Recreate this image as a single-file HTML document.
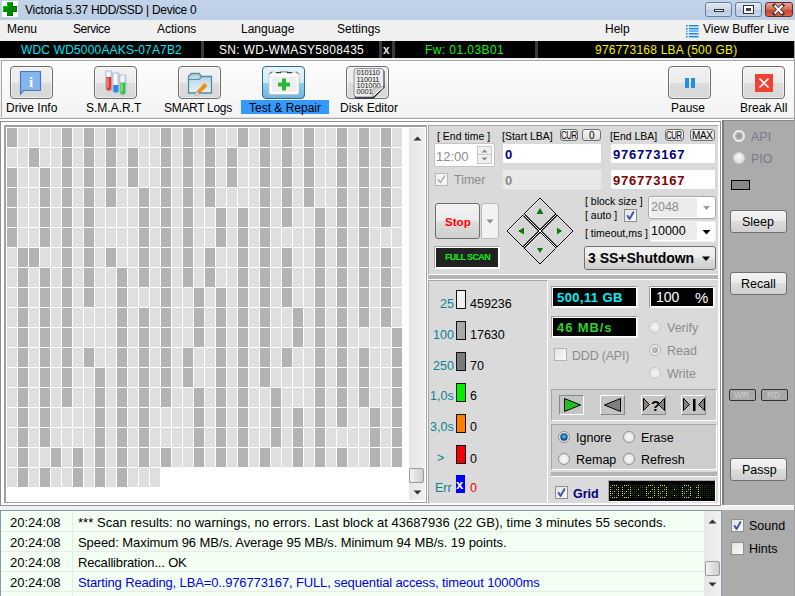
<!DOCTYPE html>
<html><head><meta charset="utf-8">
<style>
*{margin:0;padding:0;box-sizing:border-box}
html,body{width:795px;height:596px;overflow:hidden;background:#f0f0f0;font-family:"Liberation Sans",sans-serif;font-size:12px;color:#000}
.a{position:absolute;white-space:nowrap}
.t{position:absolute;white-space:nowrap;line-height:1}
.btn{position:absolute;border:1px solid #707070;border-radius:3px;background:linear-gradient(#f3f3f3 0%,#ebebeb 49%,#dddddd 50%,#cfcfcf 100%)}
.tb{position:absolute;border:1px solid #6e6e6e;box-shadow:inset 0 0 0 1px rgba(255,255,255,.55);border-radius:4px;background:linear-gradient(#f2f2f2 0%,#ebebeb 50%,#dddddd 51%,#d7d7d7 100%)}
.inp{position:absolute;background:#fff;border:1px solid #d8d8d8;border-radius:2px}
.radio{position:absolute;width:12px;height:12px;border-radius:50%;border:1px solid #8e8f8f;background:radial-gradient(circle at 50% 50%,#f4f4f4 0,#e0e0e0 70%,#cfcfcf 100%)}
.chk{position:absolute;width:13px;height:13px;border:1px solid #8e8f8f;background:linear-gradient(135deg,#d4d4d4,#fcfcfc)}
</style></head><body>
<!-- title bar -->
<div class="a" style="left:0;top:0;width:795px;height:20px;background:linear-gradient(#c3d4e8,#b9cde5)"></div>
<div class="a" style="left:2px;top:1px;width:16px;height:16px;background:#fff"></div>
<svg class="a" style="left:0;top:0" width="20" height="20"><path d="M7 2h6v4h4v6h-4v4h-6v-4h-4v-6h4z" fill="#008a00"/><path d="M7 2h6v1h-5v4h-4v4h-1v-5h4z" fill="#00c800"/><path d="M13 3v3h4v6h-4v4h-6v-1h5v-4h4v-4h-4z" fill="#005a00" opacity=".6"/></svg>
<div class="t" style="left:25px;top:4px;font-size:12px;letter-spacing:-0.28px;color:#000">Victoria 5.37 HDD/SSD | Device 0</div>
<div class="a" style="left:705px;top:2px;width:27px;height:15px;border:1px solid #6d7f99;border-radius:3px;background:linear-gradient(#e3ebf5,#c9d7e8 50%,#b7c9df 51%,#c9d9ec)"></div>
<div class="a" style="left:714px;top:9px;width:10px;height:3px;background:#fff;border:1px solid #333"></div>
<div class="a" style="left:735px;top:2px;width:27px;height:15px;border:1px solid #6d7f99;border-radius:3px;background:linear-gradient(#e3ebf5,#c9d7e8 50%,#b7c9df 51%,#c9d9ec)"></div>
<div class="a" style="left:743px;top:5px;width:11px;height:9px;background:#fff;border:1px solid #333;box-shadow:inset 0 0 0 1px #fff"></div><div class="a" style="left:746px;top:8px;width:5px;height:3px;background:#444"></div>
<div class="a" style="left:765px;top:2px;width:28px;height:15px;border:1px solid #6b2a22;border-radius:3px;background:linear-gradient(#e8a496,#d36a55 50%,#c3452c 51%,#d9644b)"></div>
<svg class="a" style="left:765px;top:2px" width="28" height="15"><path d="M9.5 3.5l8 8M17.5 3.5l-8 8" stroke="#333" stroke-width="3.6" stroke-linecap="square"/><path d="M9.5 3.5l8 8M17.5 3.5l-8 8" stroke="#fff" stroke-width="2"/></svg>
<!-- menu bar -->
<div class="t" style="left:7px;top:23px">Menu</div>
<div class="t" style="left:73px;top:23px;letter-spacing:-0.45px">Service</div>
<div class="t" style="left:157px;top:23px">Actions</div>
<div class="t" style="left:241px;top:23px">Language</div>
<div class="t" style="left:337px;top:23px">Settings</div>
<div class="t" style="left:605px;top:23px">Help</div>
<svg class="a" style="left:685px;top:24px" width="15" height="14"><rect x="1" y="1" width="13" height="12" fill="#d4e8fb"/><rect x="1" y="5" width="13" height="4" fill="#f0f0f0"/><g fill="#1a86ec"><rect x="1" y="1" width="1.6" height="1.4"/><rect x="4" y="1" width="9.5" height="1.4"/><rect x="1" y="4" width="1.6" height="1.4"/><rect x="4" y="4" width="9.5" height="1.4"/><rect x="1" y="9" width="1.6" height="1.4"/><rect x="4" y="9" width="9.5" height="1.4"/><rect x="1" y="12" width="1.6" height="1.4"/><rect x="4" y="12" width="9.5" height="1.4"/></g><g fill="#5aaaf4"><rect x="1" y="6.3" width="1.6" height="1.6"/><rect x="4" y="6.3" width="9.5" height="1.6"/></g></svg>
<div class="t" style="left:703px;top:23px">View Buffer Live</div>
<!-- drive bar -->
<div class="a" style="left:0;top:41px;width:794px;height:17px;background:#000"></div>
<div class="a" style="left:201px;top:41px;width:3px;height:17px;background:#3a3a3a"></div>
<div class="a" style="left:379px;top:41px;width:3px;height:17px;background:#3a3a3a"></div>
<div class="a" style="left:392px;top:41px;width:3px;height:17px;background:#3a3a3a"></div>
<div class="a" style="left:535px;top:41px;width:3px;height:17px;background:#3a3a3a"></div>
<div class="t" style="left:21px;top:44px;letter-spacing:0.17px;color:#00e4f0">WDC WD5000AAKS-07A7B2</div>
<div class="t" style="left:219px;top:44px;letter-spacing:0.3px;color:#fff">SN: WD-WMASY5808435</div>
<div class="t" style="left:383px;top:44px;color:#ddd;font-weight:bold">x</div>
<div class="t" style="left:425px;top:44px;letter-spacing:0.42px;color:#10f010">Fw: 01.03B01</div>
<div class="t" style="left:595px;top:44px;letter-spacing:0.23px;color:#f8f000">976773168 LBA (500 GB)</div>
<div class="a" style="left:794px;top:41px;width:1px;height:555px;background:#a0a0a0"></div>
<!-- toolbar -->
<div class="a" style="left:1px;top:60px;width:793px;height:57px;border-top:1px solid #a9a9a9;border-left:1px solid #a9a9a9;background:linear-gradient(#fdfdfd,#f3f3f3)"></div>
<div class="tb" style="left:10px;top:66px;width:43px;height:33px"></div>
<div class="tb" style="left:94px;top:66px;width:43px;height:33px"></div>
<div class="tb" style="left:178px;top:66px;width:43px;height:33px"></div>
<div class="a" style="left:262px;top:66px;width:43px;height:33px;border:1px solid #2c6a98;border-radius:4px;background:linear-gradient(#e6f4fc,#d3ecfa 50%,#93cdee 51%,#6fb7e0)"></div>
<div class="tb" style="left:346px;top:66px;width:43px;height:33px"></div>
<div class="tb" style="left:668px;top:66px;width:43px;height:33px"></div>
<div class="tb" style="left:742px;top:66px;width:43px;height:33px"></div>
<svg class="a" style="left:0;top:60px" width="795" height="45">
 <!-- drive info bubble -->
 <path d="M20.5 11.5h20v19h-17l-3 3.5z" fill="#86b5ee" stroke="#4779c4" stroke-width="1.2"/>
 <text x="31" y="26.5" font-family="Liberation Serif" font-size="15" font-weight="bold" fill="#fff" text-anchor="middle">i</text>
 <!-- smart tubes -->
 <defs><linearGradient id="gl" x1="0" x2="1"><stop offset="0" stop-color="#dfe8f4"/><stop offset=".45" stop-color="#ffffff"/><stop offset="1" stop-color="#c8d6ea"/></linearGradient></defs>
 <g stroke="#a4b6d2" stroke-width="0.9" fill="url(#gl)">
 <path d="M105.8 11h6v17a3 3 0 0 1-6 0z"/>
 <path d="M112.8 13h6v17a3 3 0 0 1-6 0z"/>
 <path d="M119.8 15h6v17a3 3 0 0 1-6 0z"/>
 </g>
 <path d="M106.3 17h5v11a2.5 2.5 0 0 1-5 0z" fill="#e4382c"/>
 <path d="M107.3 18h1.2v9.5h-1.2z" fill="#f4a09a"/>
 <path d="M113.3 25h5v5a2.5 2.5 0 0 1-5 0z" fill="#2a88e6"/>
 <path d="M120.3 22.5h5v9.5a2.5 2.5 0 0 1-5 0z" fill="#34c444"/>
 <path d="M121.3 23.5h1.2v8h-1.2z" fill="#a4eab0"/>
 <!-- smart logs folder -->
 <defs><linearGradient id="fg" x1="0" y1="0" x2="0" y2="1"><stop offset="0" stop-color="#b4d0da"/><stop offset="1" stop-color="#e6f2f6"/></linearGradient></defs>
 <path d="M188.5 16.5l3-3h7.5l2.5 3h10v16.5h-23z" fill="url(#fg)" stroke="#4e8fa6" stroke-width="1.3"/>
 <path d="M188.5 19.5h10.5l2.5-2.5" stroke="#4e8fa6" stroke-width="1.2" fill="none"/>
 <path d="M196.5 31.5l8-8.5 3 3-8.5 8z" fill="#f48c14"/>
 <path d="M196.5 31.5l3 2.5-4.5 1.8z" fill="#e8e8e8" stroke="#999" stroke-width="0.5"/>
 <!-- test & repair kit -->
 <rect x="269" y="12.3" width="30" height="22.2" rx="2" fill="#fbfbfb" stroke="#c0b8b0" stroke-width="0.6"/>
 <rect x="272" y="16.5" width="24.5" height="15.5" rx="2" fill="#eeeeee"/>
 <path d="M269.6 14.2l2.4-2.6M296.2 11.6l2.4 2.6" stroke="#505050" stroke-width="1" fill="none"/>
 <path d="M276 12.6h4.6l1-1.2M286.6 11.4l1 1.2h4.6" stroke="#404040" stroke-width="1.1" fill="none"/>
 <rect x="281.6" y="10.9" width="5" height="1.4" fill="#b0b0b0"/>
 <path d="M282 18.5h4v4h4v4h-4v4h-4v-4h-4v-4h4z" fill="#26b83a"/>
 <!-- disk editor page -->
 <path d="M357 9.5h25a2.5 2.5 0 0 1 2.5 2.5v15.5l-11 11h-16.5a2.5 2.5 0 0 1-2.5-2.5v-24a2.5 2.5 0 0 1 2.5-2.5z" fill="#151515"/>
 <path d="M356.5 8.5h24.5a2.5 2.5 0 0 1 2.5 2.5v15l-11 11h-16a2.5 2.5 0 0 1-2.5-2.5v-23.5a2.5 2.5 0 0 1 2.5-2.5z" fill="#ececec" stroke="#7d8896" stroke-width="0.9"/>
 <g font-family="Liberation Sans" font-size="7.4" fill="#1a1a1a" letter-spacing="-0.15">
 <text x="356.6" y="15.3">010110</text><text x="356.6" y="21.6">110011</text><text x="356.6" y="27.8">101000</text><text x="356.6" y="34.1">0001</text>
 </g>
 <path d="M372.5 37v-6.5a3 3 0 0 1 3-3h8" fill="#d0d0d0" stroke="#a8a8a8" stroke-width="0.8"/>
 <path d="M373.5 36l9.5-8.5" stroke="#fff" stroke-width="1"/>
 <!-- pause -->
 <rect x="685" y="18" width="4" height="10" fill="#1e8ef0"/>
 <rect x="691" y="18" width="4" height="10" fill="#1e8ef0"/>
 <!-- break -->
 <rect x="755" y="14" width="18" height="18" fill="#f04132"/>
 <path d="M759.5 18.5l9 9M768.5 18.5l-9 9" stroke="#fff" stroke-width="1.6"/>
</svg>
<div class="a" style="left:241px;top:100px;width:88px;height:14px;background:#3399ff"></div>
<div class="t" style="left:6px;top:102px">Drive Info</div>
<div class="t" style="left:86px;top:102px">S.M.A.R.T</div>
<div class="t" style="left:164px;top:102px;letter-spacing:-0.3px">SMART Logs</div>
<div class="t" style="left:249px;top:102px">Test &amp; Repair</div>
<div class="t" style="left:340px;top:102px">Disk Editor</div>
<div class="t" style="left:671px;top:102px">Pause</div>
<div class="t" style="left:740px;top:102px">Break All</div>
<!-- grid panel -->
<div class="a" style="left:0;top:117px;width:794px;height:4px;background:#fff;border-top:1px solid #e4e4e4"></div>
<div class="a" style="left:0;top:118px;width:794px;height:1px;background:#a8a8a8"></div>
<div class="a" style="left:0;top:121px;width:721px;height:385px;border:1px solid #8c8f98;background:#fff"></div>
<div class="a" style="left:4px;top:125px;width:423px;height:378px;border-top:2px solid #a0a0a0;border-left:2px solid #a0a0a0;border-right:1px solid #a0a0a0;border-bottom:1px solid #a0a0a0;background:#fff"></div>
<svg width="795" height="596" style="position:absolute;left:0;top:0"><path fill="#b3b3b3" d="M7 128h10v19h-10zM62 128h10v19h-10zM84 128h10v19h-10zM106 128h10v19h-10zM161 128h10v19h-10zM183 128h10v19h-10zM205 128h10v19h-10zM238 128h10v19h-10zM260 128h10v19h-10zM282 128h10v19h-10zM304 128h10v19h-10zM337 128h10v19h-10zM359 128h10v19h-10zM381 128h10v19h-10zM29 148h10v19h-10zM62 148h10v19h-10zM84 148h10v19h-10zM106 148h10v19h-10zM128 148h10v19h-10zM161 148h10v19h-10zM183 148h10v19h-10zM205 148h10v19h-10zM227 148h10v19h-10zM260 148h10v19h-10zM282 148h10v19h-10zM304 148h10v19h-10zM337 148h10v19h-10zM359 148h10v19h-10zM381 148h10v19h-10zM7 168h10v19h-10zM40 168h10v19h-10zM62 168h10v19h-10zM84 168h10v19h-10zM106 168h10v19h-10zM128 168h10v19h-10zM161 168h10v19h-10zM183 168h10v19h-10zM205 168h10v19h-10zM227 168h10v19h-10zM260 168h10v19h-10zM282 168h10v19h-10zM304 168h10v19h-10zM337 168h10v19h-10zM359 168h10v19h-10zM381 168h10v19h-10zM7 188h10v19h-10zM40 188h10v19h-10zM62 188h10v19h-10zM84 188h10v19h-10zM106 188h10v19h-10zM139 188h10v19h-10zM161 188h10v19h-10zM183 188h10v19h-10zM205 188h10v19h-10zM260 188h10v19h-10zM282 188h10v19h-10zM304 188h10v19h-10zM337 188h10v19h-10zM359 188h10v19h-10zM381 188h10v19h-10zM7 208h10v19h-10zM40 208h10v19h-10zM62 208h10v19h-10zM84 208h10v19h-10zM139 208h10v19h-10zM161 208h10v19h-10zM183 208h10v19h-10zM216 208h10v19h-10zM238 208h10v19h-10zM260 208h10v19h-10zM282 208h10v19h-10zM315 208h10v19h-10zM337 208h10v19h-10zM359 208h10v19h-10zM381 208h10v19h-10zM7 228h10v19h-10zM40 228h10v19h-10zM62 228h10v19h-10zM84 228h10v19h-10zM139 228h10v19h-10zM161 228h10v19h-10zM183 228h10v19h-10zM216 228h10v19h-10zM238 228h10v19h-10zM260 228h10v19h-10zM315 228h10v19h-10zM337 228h10v19h-10zM359 228h10v19h-10zM18 248h10v19h-10zM29 248h10v19h-10zM62 248h10v19h-10zM84 248h10v19h-10zM106 248h10v19h-10zM139 248h10v19h-10zM161 248h10v19h-10zM183 248h10v19h-10zM205 248h10v19h-10zM238 248h10v19h-10zM260 248h10v19h-10zM282 248h10v19h-10zM315 248h10v19h-10zM337 248h10v19h-10zM359 248h10v19h-10zM381 248h10v19h-10zM18 268h10v19h-10zM40 268h10v19h-10zM62 268h10v19h-10zM84 268h10v19h-10zM117 268h10v19h-10zM139 268h10v19h-10zM161 268h10v19h-10zM183 268h10v19h-10zM205 268h10v19h-10zM238 268h10v19h-10zM260 268h10v19h-10zM282 268h10v19h-10zM315 268h10v19h-10zM337 268h10v19h-10zM359 268h10v19h-10zM381 268h10v19h-10zM18 288h10v19h-10zM40 288h10v19h-10zM62 288h10v19h-10zM84 288h10v19h-10zM117 288h10v19h-10zM161 288h10v19h-10zM194 288h10v19h-10zM216 288h10v19h-10zM238 288h10v19h-10zM260 288h10v19h-10zM282 288h10v19h-10zM315 288h10v19h-10zM337 288h10v19h-10zM359 288h10v19h-10zM381 288h10v19h-10zM18 308h10v19h-10zM40 308h10v19h-10zM62 308h10v19h-10zM117 308h10v19h-10zM139 308h10v19h-10zM161 308h10v19h-10zM194 308h10v19h-10zM216 308h10v19h-10zM238 308h10v19h-10zM260 308h10v19h-10zM293 308h10v19h-10zM315 308h10v19h-10zM337 308h10v19h-10zM359 308h10v19h-10zM381 308h10v19h-10zM18 328h10v19h-10zM40 328h10v19h-10zM62 328h10v19h-10zM117 328h10v19h-10zM139 328h10v19h-10zM161 328h10v19h-10zM194 328h10v19h-10zM216 328h10v19h-10zM238 328h10v19h-10zM260 328h10v19h-10zM293 328h10v19h-10zM315 328h10v19h-10zM337 328h10v19h-10zM392 328h10v19h-10zM18 348h10v19h-10zM40 348h10v19h-10zM62 348h10v19h-10zM84 348h10v19h-10zM117 348h10v19h-10zM139 348h10v19h-10zM161 348h10v19h-10zM183 348h10v19h-10zM216 348h10v19h-10zM238 348h10v19h-10zM260 348h10v19h-10zM282 348h10v19h-10zM315 348h10v19h-10zM337 348h10v19h-10zM359 348h10v19h-10zM392 348h10v19h-10zM18 368h10v19h-10zM40 368h10v19h-10zM62 368h10v19h-10zM95 368h10v19h-10zM117 368h10v19h-10zM139 368h10v19h-10zM161 368h10v19h-10zM183 368h10v19h-10zM216 368h10v19h-10zM238 368h10v19h-10zM260 368h10v19h-10zM315 368h10v19h-10zM337 368h10v19h-10zM359 368h10v19h-10zM392 368h10v19h-10zM18 388h10v19h-10zM40 388h10v19h-10zM62 388h10v19h-10zM95 388h10v19h-10zM117 388h10v19h-10zM139 388h10v19h-10zM161 388h10v19h-10zM194 388h10v19h-10zM216 388h10v19h-10zM238 388h10v19h-10zM271 388h10v19h-10zM315 388h10v19h-10zM337 388h10v19h-10zM359 388h10v19h-10zM392 388h10v19h-10zM18 408h10v19h-10zM40 408h10v19h-10zM95 408h10v19h-10zM117 408h10v19h-10zM139 408h10v19h-10zM194 408h10v19h-10zM216 408h10v19h-10zM238 408h10v19h-10zM271 408h10v19h-10zM293 408h10v19h-10zM315 408h10v19h-10zM337 408h10v19h-10zM370 408h10v19h-10zM392 408h10v19h-10zM18 428h10v19h-10zM40 428h10v19h-10zM95 428h10v19h-10zM117 428h10v19h-10zM139 428h10v19h-10zM194 428h10v19h-10zM216 428h10v19h-10zM238 428h10v19h-10zM271 428h10v19h-10zM293 428h10v19h-10zM315 428h10v19h-10zM370 428h10v19h-10zM392 428h10v19h-10zM18 448h10v19h-10zM51 448h10v19h-10zM73 448h10v19h-10zM95 448h10v19h-10zM117 448h10v19h-10zM139 448h10v19h-10zM161 448h10v19h-10zM194 448h10v19h-10zM216 448h10v19h-10zM238 448h10v19h-10zM260 448h10v19h-10zM293 448h10v19h-10zM315 448h10v19h-10zM337 448h10v19h-10zM370 448h10v19h-10zM392 448h10v19h-10zM18 468h10v19h-10zM40 468h10v19h-10zM73 468h10v19h-10zM95 468h10v19h-10zM117 468h10v19h-10z"/><path fill="#dfdfdf" d="M18 128h10v19h-10zM29 128h10v19h-10zM40 128h10v19h-10zM51 128h10v19h-10zM73 128h10v19h-10zM95 128h10v19h-10zM117 128h10v19h-10zM128 128h10v19h-10zM139 128h10v19h-10zM150 128h10v19h-10zM172 128h10v19h-10zM194 128h10v19h-10zM216 128h10v19h-10zM227 128h10v19h-10zM249 128h10v19h-10zM271 128h10v19h-10zM293 128h10v19h-10zM315 128h10v19h-10zM326 128h10v19h-10zM348 128h10v19h-10zM370 128h10v19h-10zM392 128h10v19h-10zM7 148h10v19h-10zM18 148h10v19h-10zM40 148h10v19h-10zM51 148h10v19h-10zM73 148h10v19h-10zM95 148h10v19h-10zM117 148h10v19h-10zM139 148h10v19h-10zM150 148h10v19h-10zM172 148h10v19h-10zM194 148h10v19h-10zM216 148h10v19h-10zM238 148h10v19h-10zM249 148h10v19h-10zM271 148h10v19h-10zM293 148h10v19h-10zM315 148h10v19h-10zM326 148h10v19h-10zM348 148h10v19h-10zM370 148h10v19h-10zM392 148h10v19h-10zM18 168h10v19h-10zM29 168h10v19h-10zM51 168h10v19h-10zM73 168h10v19h-10zM95 168h10v19h-10zM117 168h10v19h-10zM139 168h10v19h-10zM150 168h10v19h-10zM172 168h10v19h-10zM194 168h10v19h-10zM216 168h10v19h-10zM238 168h10v19h-10zM249 168h10v19h-10zM271 168h10v19h-10zM293 168h10v19h-10zM315 168h10v19h-10zM326 168h10v19h-10zM348 168h10v19h-10zM370 168h10v19h-10zM392 168h10v19h-10zM18 188h10v19h-10zM29 188h10v19h-10zM51 188h10v19h-10zM73 188h10v19h-10zM95 188h10v19h-10zM117 188h10v19h-10zM128 188h10v19h-10zM150 188h10v19h-10zM172 188h10v19h-10zM194 188h10v19h-10zM216 188h10v19h-10zM227 188h10v19h-10zM238 188h10v19h-10zM249 188h10v19h-10zM271 188h10v19h-10zM293 188h10v19h-10zM315 188h10v19h-10zM326 188h10v19h-10zM348 188h10v19h-10zM370 188h10v19h-10zM392 188h10v19h-10zM18 208h10v19h-10zM29 208h10v19h-10zM51 208h10v19h-10zM73 208h10v19h-10zM95 208h10v19h-10zM106 208h10v19h-10zM117 208h10v19h-10zM128 208h10v19h-10zM150 208h10v19h-10zM172 208h10v19h-10zM194 208h10v19h-10zM205 208h10v19h-10zM227 208h10v19h-10zM249 208h10v19h-10zM271 208h10v19h-10zM293 208h10v19h-10zM304 208h10v19h-10zM326 208h10v19h-10zM348 208h10v19h-10zM370 208h10v19h-10zM392 208h10v19h-10zM18 228h10v19h-10zM29 228h10v19h-10zM51 228h10v19h-10zM73 228h10v19h-10zM95 228h10v19h-10zM106 228h10v19h-10zM117 228h10v19h-10zM128 228h10v19h-10zM150 228h10v19h-10zM172 228h10v19h-10zM194 228h10v19h-10zM205 228h10v19h-10zM227 228h10v19h-10zM249 228h10v19h-10zM271 228h10v19h-10zM282 228h10v19h-10zM293 228h10v19h-10zM304 228h10v19h-10zM326 228h10v19h-10zM348 228h10v19h-10zM370 228h10v19h-10zM381 228h10v19h-10zM392 228h10v19h-10zM7 248h10v19h-10zM40 248h10v19h-10zM51 248h10v19h-10zM73 248h10v19h-10zM95 248h10v19h-10zM117 248h10v19h-10zM128 248h10v19h-10zM150 248h10v19h-10zM172 248h10v19h-10zM194 248h10v19h-10zM216 248h10v19h-10zM227 248h10v19h-10zM249 248h10v19h-10zM271 248h10v19h-10zM293 248h10v19h-10zM304 248h10v19h-10zM326 248h10v19h-10zM348 248h10v19h-10zM370 248h10v19h-10zM392 248h10v19h-10zM7 268h10v19h-10zM29 268h10v19h-10zM51 268h10v19h-10zM73 268h10v19h-10zM95 268h10v19h-10zM106 268h10v19h-10zM128 268h10v19h-10zM150 268h10v19h-10zM172 268h10v19h-10zM194 268h10v19h-10zM216 268h10v19h-10zM227 268h10v19h-10zM249 268h10v19h-10zM271 268h10v19h-10zM293 268h10v19h-10zM304 268h10v19h-10zM326 268h10v19h-10zM348 268h10v19h-10zM370 268h10v19h-10zM392 268h10v19h-10zM7 288h10v19h-10zM29 288h10v19h-10zM51 288h10v19h-10zM73 288h10v19h-10zM95 288h10v19h-10zM106 288h10v19h-10zM128 288h10v19h-10zM139 288h10v19h-10zM150 288h10v19h-10zM172 288h10v19h-10zM183 288h10v19h-10zM205 288h10v19h-10zM227 288h10v19h-10zM249 288h10v19h-10zM271 288h10v19h-10zM293 288h10v19h-10zM304 288h10v19h-10zM326 288h10v19h-10zM348 288h10v19h-10zM370 288h10v19h-10zM392 288h10v19h-10zM7 308h10v19h-10zM29 308h10v19h-10zM51 308h10v19h-10zM73 308h10v19h-10zM84 308h10v19h-10zM95 308h10v19h-10zM106 308h10v19h-10zM128 308h10v19h-10zM150 308h10v19h-10zM172 308h10v19h-10zM183 308h10v19h-10zM205 308h10v19h-10zM227 308h10v19h-10zM249 308h10v19h-10zM271 308h10v19h-10zM282 308h10v19h-10zM304 308h10v19h-10zM326 308h10v19h-10zM348 308h10v19h-10zM370 308h10v19h-10zM392 308h10v19h-10zM7 328h10v19h-10zM29 328h10v19h-10zM51 328h10v19h-10zM73 328h10v19h-10zM84 328h10v19h-10zM95 328h10v19h-10zM106 328h10v19h-10zM128 328h10v19h-10zM150 328h10v19h-10zM172 328h10v19h-10zM183 328h10v19h-10zM205 328h10v19h-10zM227 328h10v19h-10zM249 328h10v19h-10zM271 328h10v19h-10zM282 328h10v19h-10zM304 328h10v19h-10zM326 328h10v19h-10zM348 328h10v19h-10zM359 328h10v19h-10zM370 328h10v19h-10zM381 328h10v19h-10zM7 348h10v19h-10zM29 348h10v19h-10zM51 348h10v19h-10zM73 348h10v19h-10zM95 348h10v19h-10zM106 348h10v19h-10zM128 348h10v19h-10zM150 348h10v19h-10zM172 348h10v19h-10zM194 348h10v19h-10zM205 348h10v19h-10zM227 348h10v19h-10zM249 348h10v19h-10zM271 348h10v19h-10zM293 348h10v19h-10zM304 348h10v19h-10zM326 348h10v19h-10zM348 348h10v19h-10zM370 348h10v19h-10zM381 348h10v19h-10zM7 368h10v19h-10zM29 368h10v19h-10zM51 368h10v19h-10zM73 368h10v19h-10zM84 368h10v19h-10zM106 368h10v19h-10zM128 368h10v19h-10zM150 368h10v19h-10zM172 368h10v19h-10zM194 368h10v19h-10zM205 368h10v19h-10zM227 368h10v19h-10zM249 368h10v19h-10zM271 368h10v19h-10zM282 368h10v19h-10zM293 368h10v19h-10zM304 368h10v19h-10zM326 368h10v19h-10zM348 368h10v19h-10zM370 368h10v19h-10zM381 368h10v19h-10zM7 388h10v19h-10zM29 388h10v19h-10zM51 388h10v19h-10zM73 388h10v19h-10zM84 388h10v19h-10zM106 388h10v19h-10zM128 388h10v19h-10zM150 388h10v19h-10zM172 388h10v19h-10zM183 388h10v19h-10zM205 388h10v19h-10zM227 388h10v19h-10zM249 388h10v19h-10zM260 388h10v19h-10zM282 388h10v19h-10zM293 388h10v19h-10zM304 388h10v19h-10zM326 388h10v19h-10zM348 388h10v19h-10zM370 388h10v19h-10zM381 388h10v19h-10zM7 408h10v19h-10zM29 408h10v19h-10zM51 408h10v19h-10zM62 408h10v19h-10zM73 408h10v19h-10zM84 408h10v19h-10zM106 408h10v19h-10zM128 408h10v19h-10zM150 408h10v19h-10zM161 408h10v19h-10zM172 408h10v19h-10zM183 408h10v19h-10zM205 408h10v19h-10zM227 408h10v19h-10zM249 408h10v19h-10zM260 408h10v19h-10zM282 408h10v19h-10zM304 408h10v19h-10zM326 408h10v19h-10zM348 408h10v19h-10zM359 408h10v19h-10zM381 408h10v19h-10zM7 428h10v19h-10zM29 428h10v19h-10zM51 428h10v19h-10zM62 428h10v19h-10zM73 428h10v19h-10zM84 428h10v19h-10zM106 428h10v19h-10zM128 428h10v19h-10zM150 428h10v19h-10zM161 428h10v19h-10zM172 428h10v19h-10zM183 428h10v19h-10zM205 428h10v19h-10zM227 428h10v19h-10zM249 428h10v19h-10zM260 428h10v19h-10zM282 428h10v19h-10zM304 428h10v19h-10zM326 428h10v19h-10zM337 428h10v19h-10zM348 428h10v19h-10zM359 428h10v19h-10zM381 428h10v19h-10zM7 448h10v19h-10zM29 448h10v19h-10zM40 448h10v19h-10zM62 448h10v19h-10zM84 448h10v19h-10zM106 448h10v19h-10zM128 448h10v19h-10zM150 448h10v19h-10zM172 448h10v19h-10zM183 448h10v19h-10zM205 448h10v19h-10zM227 448h10v19h-10zM249 448h10v19h-10zM271 448h10v19h-10zM282 448h10v19h-10zM304 448h10v19h-10zM326 448h10v19h-10zM348 448h10v19h-10zM359 448h10v19h-10zM381 448h10v19h-10zM7 468h10v19h-10zM29 468h10v19h-10zM51 468h10v19h-10zM62 468h10v19h-10zM84 468h10v19h-10zM106 468h10v19h-10zM128 468h10v19h-10zM139 468h10v19h-10zM150 468h10v19h-10z"/></svg>
<!-- grid scrollbar -->
<div class="a" style="left:409px;top:128px;width:16px;height:372px;background:linear-gradient(90deg,#e6e6e6,#f0f0f0)"></div>
<div class="a" style="left:409px;top:468px;width:15px;height:15px;border:1px solid #999;border-radius:2px;background:linear-gradient(90deg,#f4f4f4,#e0e0e0 50%,#cfcfcf)"></div>
<svg class="a" style="left:409px;top:128px" width="16" height="372"><path d="M4.5 12.5l4-4 4 4z" fill="#333"/><path d="M4.5 362.5l4 4 4-4z" fill="#333"/></svg>
<!-- outer container -->
<div class="a" style="left:720px;top:121px;width:2px;height:384px;background:#fff"></div>
<div class="a" style="left:0;top:505px;width:721px;height:1px;background:#8c8f98"></div>
<div class="a" style="left:0;top:121px;width:721px;height:1px;background:#8c8f98"></div>
<div class="a" style="left:720px;top:121px;width:1px;height:385px;background:#8c8f98"></div>
<!-- right panel 1 -->
<div class="a" style="left:428px;top:125px;width:291px;height:150px;background:#dadada;border-top:1px solid #a6a6a6;border-left:1px solid #a6a6a6;border-right:1px solid #fff;border-bottom:1px solid #fff"></div>
<div class="a" style="left:428px;top:275px;width:290px;height:4px;background:#b4b4b4"></div>
<div class="a" style="left:428px;top:279px;width:291px;height:1px;background:#fff"></div>
<div class="t" style="left:437px;top:131px;font-size:10.5px">[ End time ]</div>
<div class="t" style="left:502px;top:131px;font-size:10.5px">[Start LBA]</div>
<div class="t" style="left:610px;top:131px;font-size:10.5px">[End LBA]</div>
<div class="a" style="left:560px;top:129px;width:18px;height:12px;border:1px solid #707070;border-radius:3px;background:linear-gradient(#f6f6f6,#dedede)"></div>
<div class="t" style="left:561px;top:130.5px;font-size:10px;letter-spacing:-0.5px;transform:scaleX(0.78);transform-origin:0 0">CUR</div>
<div class="a" style="left:582px;top:129px;width:19px;height:12px;border:1px solid #707070;border-radius:3px;background:linear-gradient(#f6f6f6,#dedede)"></div>
<div class="t" style="left:589px;top:131px;font-size:10px">0</div>
<div class="a" style="left:665px;top:129px;width:19px;height:12px;border:1px solid #707070;border-radius:3px;background:linear-gradient(#f6f6f6,#dedede)"></div>
<div class="t" style="left:666px;top:130.5px;font-size:10px;letter-spacing:-0.5px;transform:scaleX(0.78);transform-origin:0 0">CUR</div>
<div class="a" style="left:690px;top:129px;width:25px;height:12px;border:1px solid #707070;border-radius:3px;background:linear-gradient(#f6f6f6,#dedede)"></div>
<div class="t" style="left:692px;top:130.5px;font-size:10px;letter-spacing:-0.4px">MAX</div>
<div class="inp" style="left:434px;top:143px;width:61px;height:24px;border-color:#c4c4c4"></div>
<div class="t" style="left:436px;top:150px;font-size:13px;color:#8c8c8c">12:00</div>
<div class="a" style="left:477px;top:146px;width:15px;height:18px;border:1px solid #c8c8c8;background:#f0f0f0"></div>
<div class="a" style="left:477px;top:154px;width:15px;height:1px;background:#c8c8c8"></div>
<svg class="a" style="left:477px;top:146px" width="15" height="18"><path d="M4.5 6.5h6l-3-3z M4.5 11.5h6l-3 3z" fill="#8a8a8a"/></svg>
<div class="inp" style="left:502px;top:143px;width:100px;height:21px"></div>
<div class="t" style="left:505px;top:148px;font-size:13px;font-weight:bold;color:#000080">0</div>
<div class="inp" style="left:610px;top:143px;width:106px;height:21px"></div>
<div class="t" style="left:613px;top:148px;font-size:13px;font-weight:bold;color:#000080;letter-spacing:0.8px">976773167</div>
<div class="chk" style="left:435px;top:173px;background:#f4f4f4;border-color:#b8b8b8"></div>
<svg class="a" style="left:435px;top:173px" width="13" height="13"><path d="M3 6.5l2.5 3 4.5-7" stroke="#a0a0a0" fill="none" stroke-width="1.3"/></svg>
<div class="t" style="left:454px;top:174px;font-size:12.5px;color:#8c8c8c">Timer</div>
<div class="inp" style="left:502px;top:169px;width:100px;height:21px;background:#e8e8e8;border-color:#e0e0e0"></div>
<div class="t" style="left:505px;top:174px;font-size:13px;font-weight:bold;color:#8c8c8c">0</div>
<div class="inp" style="left:610px;top:169px;width:106px;height:21px"></div>
<div class="t" style="left:613px;top:174px;font-size:13px;font-weight:bold;color:#800000;letter-spacing:0.8px">976773167</div>
<div class="a" style="left:435px;top:203px;width:45px;height:36px;border:1px solid #707070;border-radius:3px;background:linear-gradient(#f2f2f2 0%,#ebebeb 50%,#dddddd 51%,#cfcfcf 100%)"></div>
<div class="t" style="left:445px;top:215.5px;font-size:11.6px;font-weight:bold;color:#ff0000">Stop</div>
<div class="a" style="left:481px;top:203px;width:18px;height:36px;border:1px solid #b8b8b8;border-radius:3px;background:#f2f2f2"></div>
<svg class="a" style="left:481px;top:203px" width="18" height="36"><path d="M5.5 16.5h7l-3.5 4z" fill="#8a8a8a"/></svg>
<div class="a" style="left:434px;top:246px;width:66px;height:23px;border:1px solid #a8a8a8;border-right-color:#fff;border-bottom-color:#fff;background:#fff;padding:1px"><div style="width:100%;height:100%;background:#222"></div></div>
<div class="t" style="left:445px;top:252.5px;font-size:9px;letter-spacing:-0.65px;font-weight:bold;color:#10f010">FULL SCAN</div>
<svg class="a" style="left:500px;top:191px" width="80" height="80">
 <g transform="translate(40 40)">
  <path d="M0 -33L33 0L0 33L-33 0Z" fill="#d6d6d6" stroke="#000" stroke-width="1"/>
  <path d="M-16.5 -16.5L16.5 16.5M16.5 -16.5L-16.5 16.5" stroke="#000" stroke-width="3"/>
  <path d="M-16.5 -16.5L16.5 16.5M16.5 -16.5L-16.5 16.5" stroke="#fff" stroke-width="1"/>
  <path d="M-0.5 -31.5L-15.5 -16.5M-31.5 -0.5L-16.5 -15.5M0.5 2.5L15.5 17.5M-14.5 17.5L0 3" stroke="#fff" stroke-width="1" fill="none"/>
  <path d="M0 -23l-3.5 6h7z" fill="#0a7a0a"/>
  <path d="M0 22l-3 -5h6z" fill="#0a7a0a"/>
  <path d="M-22 0l6 -3.5v7z" fill="#0a7a0a"/>
  <path d="M22 0l-5 -3.5v7z" fill="#0a7a0a"/>
 </g>
</svg>
<div class="t" style="left:585px;top:196px;font-size:10.5px">[ block size ]</div>
<div class="t" style="left:585px;top:210px;font-size:10.5px">[ auto ]</div>
<div class="chk" style="left:624px;top:209px;background:linear-gradient(135deg,#e4e4e4,#fafafa)"></div>
<svg class="a" style="left:624px;top:209px" width="13" height="13"><path d="M3.2 6.3l2.3 3.6 4.3-7.4" stroke="#3a55a6" fill="none" stroke-width="1.9" stroke-linejoin="round"/></svg>
<div class="t" style="left:585px;top:228px;font-size:10.5px">[ timeout,ms ]</div>
<div class="inp" style="left:648px;top:196px;width:68px;height:23px;border-color:#a8a8a8;border-radius:3px"></div>
<div class="a" style="left:651px;top:198px;width:46px;height:19px;background:#ececec"></div>
<div class="t" style="left:651px;top:201px;font-size:12.5px;color:#8c8c8c">2048</div>
<svg class="a" style="left:697px;top:196px" width="19" height="23"><path d="M6 10h7l-3.5 4z" fill="#9a9a9a"/></svg>
<div class="inp" style="left:650px;top:221px;width:66px;height:21px;border-color:#f0f0f0"></div>
<div class="a" style="left:651px;top:222px;width:46px;height:18px;background:#ececec"></div>
<div class="t" style="left:651px;top:225px;font-size:12.5px;color:#000">10000</div>
<svg class="a" style="left:697px;top:221px" width="19" height="21"><path d="M5.5 9h8l-4 4.5z" fill="#000"/></svg>
<div class="a" style="left:584px;top:246px;width:132px;height:24px;border:1px solid #707070;border-radius:3px;background:linear-gradient(#f2f2f2 0%,#ebebeb 50%,#dddddd 51%,#cfcfcf 100%)"></div>
<div class="t" style="left:588px;top:251px;font-size:14px;font-weight:bold;color:#000">3 SS+Shutdown</div>
<svg class="a" style="left:697px;top:246px" width="19" height="24"><path d="M5 10.5h8l-4 4.5z" fill="#000"/></svg>
<!-- panel 2 legend -->
<div class="a" style="left:428px;top:280px;width:120px;height:224px;background:#dadada;border-top:1px solid #a6a6a6;border-left:1px solid #a6a6a6;border-right:1px solid #fff;border-bottom:1px solid #fff"></div>
<div class="a" style="left:548px;top:280px;width:171px;height:224px;background:#dadada;border-right:1px solid #fff;border-bottom:1px solid #fff"></div>
<div class="t" style="left:440px;top:298px;font-size:12.5px;color:#0b8294">25</div>
<div class="t" style="left:433px;top:329px;font-size:12.5px;color:#0b8294">100</div>
<div class="t" style="left:433px;top:360px;font-size:12.5px;color:#0b8294">250</div>
<div class="t" style="left:430px;top:390px;font-size:12.5px;color:#0b8294">1,0s</div>
<div class="t" style="left:430px;top:421px;font-size:12.5px;color:#0b8294">3,0s</div>
<div class="t" style="left:437px;top:452px;font-size:12.5px;color:#0b8294">&gt;</div>
<div class="t" style="left:435px;top:482px;font-size:12.5px;color:#0b8294">Err</div>
<div class="a" style="left:456px;top:290px;width:10px;height:19px;border:1px solid #111;background:#f0f0f0"></div>
<div class="a" style="left:456px;top:321px;width:10px;height:19px;border:1px solid #111;background:#a8a8a8"></div>
<div class="a" style="left:456px;top:352px;width:10px;height:19px;border:1px solid #111;background:#7a7a7a"></div>
<div class="a" style="left:456px;top:383px;width:10px;height:19px;border:1px solid #111;background:#00f000"></div>
<div class="a" style="left:456px;top:414px;width:10px;height:19px;border:1px solid #111;background:#ff8000"></div>
<div class="a" style="left:456px;top:445px;width:10px;height:19px;border:1px solid #111;background:#f00000"></div>
<div class="a" style="left:456px;top:475px;width:9px;height:18px;background:#0000ff"></div>
<div class="t" style="left:456px;top:478px;font-size:13px;font-weight:bold;color:#fff">x</div>
<div class="t" style="left:470px;top:298px;font-size:12.5px;color:#000">459236</div>
<div class="t" style="left:470px;top:329px;font-size:12.5px;color:#000">17630</div>
<div class="t" style="left:470px;top:360px;font-size:12.5px;color:#000">70</div>
<div class="t" style="left:470px;top:390px;font-size:12.5px;color:#000">6</div>
<div class="t" style="left:470px;top:421px;font-size:12.5px;color:#000">0</div>
<div class="t" style="left:470px;top:453px;font-size:12.5px;color:#000">0</div>
<div class="t" style="left:470px;top:482px;font-size:12.5px;color:#f00000">0</div>
<!-- info boxes -->
<div class="a" style="left:551px;top:286px;width:87px;height:22px;border:1px solid #a0a0a0;border-right-color:#f4f4f4;border-bottom-color:#f4f4f4;padding:1px;background:#fff"><div style="width:100%;height:100%;background:#000"></div></div>
<div class="t" style="left:557px;top:291px;font-size:13px;letter-spacing:0.4px;font-weight:bold;color:#00f0f8">500,11 GB</div>
<div class="a" style="left:649px;top:286px;width:66px;height:22px;border:1px solid #a0a0a0;border-right-color:#f4f4f4;border-bottom-color:#f4f4f4;padding:1px;background:#fff"><div style="width:100%;height:100%;background:#000"></div></div>
<div class="t" style="left:656px;top:290px;font-size:14px;color:#fff">100</div>
<div class="t" style="left:695px;top:290px;font-size:15px;color:#fff">%</div>
<div class="a" style="left:551px;top:316px;width:87px;height:22px;border:1px solid #a0a0a0;border-right-color:#f4f4f4;border-bottom-color:#f4f4f4;padding:1px;background:#fff"><div style="width:100%;height:100%;background:#000"></div></div>
<div class="t" style="left:557px;top:321px;font-size:13px;letter-spacing:0.9px;font-weight:bold;color:#30d030">46 MB/s</div>
<div class="chk" style="left:554px;top:348px;background:linear-gradient(135deg,#e4e4e4,#fafafa);border-color:#b4b4b4"></div>
<div class="t" style="left:572px;top:350px;font-size:12.5px;letter-spacing:-0.2px;color:#8c8c8c">DDD (API)</div>
<div class="radio" style="left:649px;top:321px;border-color:#c4c4c4;background:radial-gradient(#f4f4f4,#e2e2e2)"></div>
<div class="radio" style="left:649px;top:344px;border-color:#b4b4b4;background:radial-gradient(#f4f4f4,#e2e2e2)"></div>
<div class="a" style="left:652px;top:347px;width:6px;height:6px;border-radius:50%;background:radial-gradient(circle at 40% 40%,#cfcfcf,#8a8a8a)"></div>
<div class="radio" style="left:649px;top:367px;border-color:#c4c4c4;background:radial-gradient(#f4f4f4,#e2e2e2)"></div>
<div class="t" style="left:667px;top:322px;font-size:12.5px;color:#8c8c8c">Verify</div>
<div class="t" style="left:667px;top:345px;font-size:12.5px;color:#8c8c8c">Read</div>
<div class="t" style="left:667px;top:368px;font-size:12.5px;color:#8c8c8c">Write</div>
<!-- buttons group -->
<div class="a" style="left:551px;top:389px;width:166px;height:32px;background:#cdcdcd;border-top:1px solid #a6a6a6;border-left:1px solid #a6a6a6;border-bottom:1px solid #fff;border-right:1px solid #fff"></div>
<div class="a" style="left:559px;top:395px;width:25px;height:20px;background:#c4c4c4;border-top:1px solid #888;border-left:1px solid #888;border-bottom:1px solid #fff;border-right:1px solid #fff"></div>
<div class="a" style="left:600px;top:395px;width:25px;height:20px;background:#c4c4c4;border-top:1px solid #fff;border-left:1px solid #fff;border-bottom:1px solid #888;border-right:1px solid #888"></div>
<div class="a" style="left:641px;top:395px;width:25px;height:20px;background:#c4c4c4;border-top:1px solid #fff;border-left:1px solid #fff;border-bottom:1px solid #888;border-right:1px solid #888"></div>
<div class="a" style="left:681px;top:395px;width:25px;height:20px;background:#c4c4c4;border-top:1px solid #fff;border-left:1px solid #fff;border-bottom:1px solid #888;border-right:1px solid #888"></div>
<svg class="a" style="left:551px;top:389px" width="166" height="32">
 <path d="M13.5 9.5v13l16 -6.5z" fill="#22c022" stroke="#000" stroke-width="1"/>
 <path d="M69.5 9.5v13l-16 -6.5z" fill="#808080" stroke="#000" stroke-width="1"/>
 <path d="M92.5 9.5v12l6 -6z" fill="#808080" stroke="#000" stroke-width="1"/>
 <text x="104.5" y="21.5" font-family="Liberation Sans" font-size="15" font-weight="bold" text-anchor="middle" fill="#000">?</text>
 <path d="M113.5 9.5v12l-6 -6z" fill="#808080" stroke="#000" stroke-width="1"/>
 <path d="M132.5 9.5v12l6 -6z" fill="#808080" stroke="#000" stroke-width="1"/>
 <rect x="142" y="10" width="2.5" height="12" fill="#000"/>
 <path d="M153.5 9.5v12l-6 -6z" fill="#808080" stroke="#000" stroke-width="1"/>
</svg>
<!-- radio group -->
<div class="a" style="left:551px;top:424px;width:166px;height:46px;background:#cdcdcd;border-top:1px solid #a6a6a6;border-left:1px solid #a6a6a6;border-bottom:1px solid #fff;border-right:1px solid #fff"></div>
<div class="radio" style="left:558px;top:431px;background:radial-gradient(#fafafa,#dedede)"></div>
<svg class="a" style="left:558px;top:431px" width="12" height="12"><defs><radialGradient id="rd" cx="50%" cy="45%" r="55%"><stop offset="0" stop-color="#6ad8ff"/><stop offset=".5" stop-color="#1a78c0"/><stop offset="1" stop-color="#0a2c5a"/></radialGradient></defs><circle cx="6" cy="6" r="3.7" fill="url(#rd)"/></svg>
<div class="radio" style="left:623px;top:431px;background:radial-gradient(#fafafa,#dedede)"></div>
<div class="radio" style="left:558px;top:453px;background:radial-gradient(#fafafa,#dedede)"></div>
<div class="radio" style="left:623px;top:453px;background:radial-gradient(#fafafa,#dedede)"></div>
<div class="t" style="left:576px;top:432px;font-size:12.5px">Ignore</div>
<div class="t" style="left:641px;top:432px;font-size:12.5px">Erase</div>
<div class="t" style="left:576px;top:454px;font-size:12.5px">Remap</div>
<div class="t" style="left:641px;top:454px;font-size:12.5px">Refresh</div>
<div class="a" style="left:551px;top:472px;width:166px;height:4px;background:#b4b4b4"></div>
<div class="a" style="left:551px;top:476px;width:166px;height:1px;background:#fff"></div>
<div class="chk" style="left:555px;top:486px;background:linear-gradient(135deg,#e4e4e4,#fafafa)"></div>
<svg class="a" style="left:555px;top:486px" width="13" height="13"><path d="M3.2 6.3l2.3 3.6 4.3-7.4" stroke="#3a55a6" fill="none" stroke-width="1.9" stroke-linejoin="round"/></svg>
<div class="t" style="left:573px;top:487.5px;font-size:12.5px;font-weight:bold;color:#000080">Grid</div>
<div class="a" style="left:608px;top:480px;width:108px;height:22px;border:1px solid #a8a8a8;border-right-color:#fff;border-bottom-color:#fff;padding:0;background:#000"></div><svg class="a" style="left:0;top:0" width="795" height="596"><path fill="#0c3a0c" d="M610 485h1v1h-1zM610 497h1v1h-1zM612 487h1v1h-1zM612 489h1v1h-1zM612 491h1v1h-1zM612 495h1v1h-1zM614 487h1v1h-1zM614 489h1v1h-1zM614 493h1v1h-1zM614 495h1v1h-1zM616 487h1v1h-1zM616 491h1v1h-1zM616 493h1v1h-1zM616 495h1v1h-1zM618 485h1v1h-1zM618 497h1v1h-1zM620 485h1v1h-1zM620 487h1v1h-1zM620 489h1v1h-1zM620 491h1v1h-1zM620 493h1v1h-1zM620 495h1v1h-1zM620 497h1v1h-1zM622 485h1v1h-1zM622 497h1v1h-1zM624 487h1v1h-1zM624 489h1v1h-1zM624 491h1v1h-1zM624 495h1v1h-1zM626 487h1v1h-1zM626 489h1v1h-1zM626 493h1v1h-1zM626 495h1v1h-1zM628 487h1v1h-1zM628 491h1v1h-1zM628 493h1v1h-1zM628 495h1v1h-1zM630 485h1v1h-1zM630 497h1v1h-1zM632 485h1v1h-1zM632 487h1v1h-1zM632 489h1v1h-1zM632 491h1v1h-1zM632 493h1v1h-1zM632 495h1v1h-1zM632 497h1v1h-1zM634 485h1v1h-1zM634 487h1v1h-1zM634 489h1v1h-1zM634 491h1v1h-1zM634 493h1v1h-1zM634 495h1v1h-1zM634 497h1v1h-1zM636 485h1v1h-1zM636 487h1v1h-1zM636 489h1v1h-1zM636 491h1v1h-1zM636 493h1v1h-1zM636 495h1v1h-1zM636 497h1v1h-1zM638 485h1v1h-1zM638 487h1v1h-1zM638 491h1v1h-1zM638 493h1v1h-1zM638 497h1v1h-1zM640 485h1v1h-1zM640 487h1v1h-1zM640 489h1v1h-1zM640 491h1v1h-1zM640 493h1v1h-1zM640 495h1v1h-1zM640 497h1v1h-1zM642 485h1v1h-1zM642 487h1v1h-1zM642 489h1v1h-1zM642 491h1v1h-1zM642 493h1v1h-1zM642 495h1v1h-1zM642 497h1v1h-1zM644 485h1v1h-1zM644 487h1v1h-1zM644 489h1v1h-1zM644 491h1v1h-1zM644 493h1v1h-1zM644 495h1v1h-1zM644 497h1v1h-1zM646 485h1v1h-1zM646 497h1v1h-1zM648 487h1v1h-1zM648 489h1v1h-1zM648 491h1v1h-1zM648 495h1v1h-1zM650 487h1v1h-1zM650 489h1v1h-1zM650 493h1v1h-1zM650 495h1v1h-1zM652 487h1v1h-1zM652 491h1v1h-1zM652 493h1v1h-1zM652 495h1v1h-1zM654 485h1v1h-1zM654 497h1v1h-1zM656 485h1v1h-1zM656 487h1v1h-1zM656 489h1v1h-1zM656 491h1v1h-1zM656 493h1v1h-1zM656 495h1v1h-1zM656 497h1v1h-1zM658 485h1v1h-1zM658 497h1v1h-1zM660 487h1v1h-1zM660 489h1v1h-1zM660 491h1v1h-1zM660 495h1v1h-1zM662 487h1v1h-1zM662 489h1v1h-1zM662 493h1v1h-1zM662 495h1v1h-1zM664 487h1v1h-1zM664 491h1v1h-1zM664 493h1v1h-1zM664 495h1v1h-1zM666 485h1v1h-1zM666 497h1v1h-1zM668 485h1v1h-1zM668 487h1v1h-1zM668 489h1v1h-1zM668 491h1v1h-1zM668 493h1v1h-1zM668 495h1v1h-1zM668 497h1v1h-1zM670 485h1v1h-1zM670 487h1v1h-1zM670 489h1v1h-1zM670 491h1v1h-1zM670 493h1v1h-1zM670 495h1v1h-1zM670 497h1v1h-1zM672 485h1v1h-1zM672 487h1v1h-1zM672 489h1v1h-1zM672 491h1v1h-1zM672 493h1v1h-1zM672 495h1v1h-1zM672 497h1v1h-1zM674 485h1v1h-1zM674 487h1v1h-1zM674 491h1v1h-1zM674 493h1v1h-1zM674 497h1v1h-1zM676 485h1v1h-1zM676 487h1v1h-1zM676 489h1v1h-1zM676 491h1v1h-1zM676 493h1v1h-1zM676 495h1v1h-1zM676 497h1v1h-1zM678 485h1v1h-1zM678 487h1v1h-1zM678 489h1v1h-1zM678 491h1v1h-1zM678 493h1v1h-1zM678 495h1v1h-1zM678 497h1v1h-1zM680 485h1v1h-1zM680 487h1v1h-1zM680 489h1v1h-1zM680 491h1v1h-1zM680 493h1v1h-1zM680 495h1v1h-1zM680 497h1v1h-1zM682 485h1v1h-1zM682 497h1v1h-1zM684 487h1v1h-1zM684 489h1v1h-1zM684 491h1v1h-1zM684 495h1v1h-1zM686 487h1v1h-1zM686 489h1v1h-1zM686 493h1v1h-1zM686 495h1v1h-1zM688 487h1v1h-1zM688 491h1v1h-1zM688 493h1v1h-1zM688 495h1v1h-1zM690 485h1v1h-1zM690 497h1v1h-1zM692 485h1v1h-1zM692 487h1v1h-1zM692 489h1v1h-1zM692 491h1v1h-1zM692 493h1v1h-1zM692 495h1v1h-1zM692 497h1v1h-1zM694 485h1v1h-1zM694 487h1v1h-1zM694 489h1v1h-1zM694 491h1v1h-1zM694 493h1v1h-1zM694 495h1v1h-1zM694 497h1v1h-1zM696 485h1v1h-1zM696 489h1v1h-1zM696 491h1v1h-1zM696 493h1v1h-1zM696 495h1v1h-1zM700 485h1v1h-1zM700 487h1v1h-1zM700 489h1v1h-1zM700 491h1v1h-1zM700 493h1v1h-1zM700 495h1v1h-1zM702 485h1v1h-1zM702 487h1v1h-1zM702 489h1v1h-1zM702 491h1v1h-1zM702 493h1v1h-1zM702 495h1v1h-1zM702 497h1v1h-1zM704 485h1v1h-1zM704 487h1v1h-1zM704 489h1v1h-1zM704 491h1v1h-1zM704 493h1v1h-1zM704 495h1v1h-1zM704 497h1v1h-1zM706 485h1v1h-1zM706 487h1v1h-1zM706 489h1v1h-1zM706 491h1v1h-1zM706 493h1v1h-1zM706 495h1v1h-1zM706 497h1v1h-1zM708 485h1v1h-1zM708 487h1v1h-1zM708 489h1v1h-1zM708 491h1v1h-1zM708 493h1v1h-1zM708 495h1v1h-1zM708 497h1v1h-1zM710 485h1v1h-1zM710 487h1v1h-1zM710 489h1v1h-1zM710 491h1v1h-1zM710 493h1v1h-1zM710 495h1v1h-1zM710 497h1v1h-1zM712 485h1v1h-1zM712 487h1v1h-1zM712 489h1v1h-1zM712 491h1v1h-1zM712 493h1v1h-1zM712 495h1v1h-1zM712 497h1v1h-1zM714 485h1v1h-1zM714 487h1v1h-1zM714 489h1v1h-1zM714 491h1v1h-1zM714 493h1v1h-1zM714 495h1v1h-1zM714 497h1v1h-1z"/><path fill="#f8e800" d="M610 487h1v1h-1zM610 489h1v1h-1zM610 491h1v1h-1zM610 493h1v1h-1zM610 495h1v1h-1zM612 485h1v1h-1zM612 493h1v1h-1zM612 497h1v1h-1zM614 485h1v1h-1zM614 491h1v1h-1zM614 497h1v1h-1zM616 485h1v1h-1zM616 489h1v1h-1zM616 497h1v1h-1zM618 487h1v1h-1zM618 489h1v1h-1zM618 491h1v1h-1zM618 493h1v1h-1zM618 495h1v1h-1zM622 487h1v1h-1zM622 489h1v1h-1zM622 491h1v1h-1zM622 493h1v1h-1zM622 495h1v1h-1zM624 485h1v1h-1zM624 493h1v1h-1zM624 497h1v1h-1zM626 485h1v1h-1zM626 491h1v1h-1zM626 497h1v1h-1zM628 485h1v1h-1zM628 489h1v1h-1zM628 497h1v1h-1zM630 487h1v1h-1zM630 489h1v1h-1zM630 491h1v1h-1zM630 493h1v1h-1zM630 495h1v1h-1zM638 489h1v1h-1zM638 495h1v1h-1zM646 487h1v1h-1zM646 489h1v1h-1zM646 491h1v1h-1zM646 493h1v1h-1zM646 495h1v1h-1zM648 485h1v1h-1zM648 493h1v1h-1zM648 497h1v1h-1zM650 485h1v1h-1zM650 491h1v1h-1zM650 497h1v1h-1zM652 485h1v1h-1zM652 489h1v1h-1zM652 497h1v1h-1zM654 487h1v1h-1zM654 489h1v1h-1zM654 491h1v1h-1zM654 493h1v1h-1zM654 495h1v1h-1zM658 487h1v1h-1zM658 489h1v1h-1zM658 491h1v1h-1zM658 493h1v1h-1zM658 495h1v1h-1zM660 485h1v1h-1zM660 493h1v1h-1zM660 497h1v1h-1zM662 485h1v1h-1zM662 491h1v1h-1zM662 497h1v1h-1zM664 485h1v1h-1zM664 489h1v1h-1zM664 497h1v1h-1zM666 487h1v1h-1zM666 489h1v1h-1zM666 491h1v1h-1zM666 493h1v1h-1zM666 495h1v1h-1zM674 489h1v1h-1zM674 495h1v1h-1zM682 487h1v1h-1zM682 489h1v1h-1zM682 491h1v1h-1zM682 493h1v1h-1zM682 495h1v1h-1zM684 485h1v1h-1zM684 493h1v1h-1zM684 497h1v1h-1zM686 485h1v1h-1zM686 491h1v1h-1zM686 497h1v1h-1zM688 485h1v1h-1zM688 489h1v1h-1zM688 497h1v1h-1zM690 487h1v1h-1zM690 489h1v1h-1zM690 491h1v1h-1zM690 493h1v1h-1zM690 495h1v1h-1zM696 487h1v1h-1zM696 497h1v1h-1zM698 485h1v1h-1zM698 487h1v1h-1zM698 489h1v1h-1zM698 491h1v1h-1zM698 493h1v1h-1zM698 495h1v1h-1zM698 497h1v1h-1zM700 497h1v1h-1z" /></svg>
<!-- sidebar -->
<div class="a" style="left:722px;top:120px;width:72px;height:385px;background:#ababab;border-top:1px solid #8a8a8a;border-left:2px solid #7c7c7c"></div>
<div class="a" style="left:722px;top:505px;width:72px;height:1px;background:#fff"></div>
<div class="radio" style="left:733px;top:130px;width:12px;height:12px;border:2px solid #ececec;background:radial-gradient(#8e8e8e,#c8c8c8)"></div>
<div class="radio" style="left:733px;top:152px;width:12px;height:12px;border-color:#d0d0d0;background:radial-gradient(circle at 50% 40%,#fafafa,#d4d4d4)"></div>
<div class="t" style="left:751px;top:131px;font-size:12.5px;color:#7a7a84">API</div>
<div class="t" style="left:751px;top:153px;font-size:12.5px;color:#7a7a84">PIO</div>
<div class="a" style="left:731px;top:180px;width:19px;height:10px;border:1px solid #000;background:#888"></div>
<div class="btn" style="left:730px;top:210px;width:57px;height:23px"></div>
<div class="t" style="left:742px;top:216px;font-size:12.5px">Sleep</div>
<div class="btn" style="left:730px;top:272px;width:57px;height:23px"></div>
<div class="t" style="left:741px;top:278px;font-size:12.5px">Recall</div>
<div class="a" style="left:729px;top:389px;width:27px;height:12px;border:1px solid #333;border-radius:2px;background:#a8a8a8"></div>
<div class="t" style="left:734px;top:391px;font-size:9px;font-weight:bold;color:#c4c4c4">WR</div>
<div class="a" style="left:761px;top:389px;width:27px;height:12px;border:1px solid #333;border-radius:2px;background:#a8a8a8"></div>
<div class="t" style="left:767px;top:391px;font-size:9px;font-weight:bold;color:#c4c4c4">RD</div>
<div class="btn" style="left:730px;top:458px;width:57px;height:23px"></div>
<div class="t" style="left:742px;top:464px;font-size:12.5px">Passp</div>
<!-- log -->
<div class="a" style="left:0;top:510px;width:722px;height:86px;border:1px solid #8c98a8;border-bottom:none;background:#f4fff4"></div>
<div class="a" style="left:722px;top:510px;width:72px;height:86px;background:#ababab"></div>
<div class="a" style="left:72px;top:511px;width:1px;height:85px;background:#e4ece4"></div>
<div class="a" style="left:1px;top:531px;width:703px;height:1px;background:#e4ece4"></div>
<div class="a" style="left:1px;top:551px;width:703px;height:1px;background:#e4ece4"></div>
<div class="a" style="left:1px;top:571px;width:703px;height:1px;background:#e4ece4"></div>
<div class="a" style="left:1px;top:591px;width:703px;height:1px;background:#e4ece4"></div>
<div class="t" style="left:10px;top:516px;font-size:13px">20:24:08</div>
<div class="t" style="left:10px;top:536px;font-size:13px">20:24:08</div>
<div class="t" style="left:10px;top:556px;font-size:13px">20:24:08</div>
<div class="t" style="left:10px;top:576px;font-size:13px">20:24:08</div>
<div class="t" style="left:78px;top:516px;font-size:13px;letter-spacing:0.05px">*** Scan results: no warnings, no errors. Last block at 43687936 (22 GB), time 3 minutes 55 seconds.</div>
<div class="t" style="left:78px;top:536px;font-size:13px;letter-spacing:-0.07px">Speed: Maximum 96 MB/s. Average 95 MB/s. Minimum 94 MB/s. 19 points.</div>
<div class="t" style="left:78px;top:556px;font-size:13px;letter-spacing:-0.17px">Recallibration... OK</div>
<div class="t" style="left:78px;top:576px;font-size:13px;letter-spacing:-0.14px;color:#0000e8">Starting Reading, LBA=0..976773167, FULL, sequential access, timeout 10000ms</div>
<div class="a" style="left:704px;top:511px;width:17px;height:85px;background:linear-gradient(90deg,#e6e6e6,#f2f2f2)"></div>
<div class="a" style="left:705px;top:561px;width:15px;height:15px;border:1px solid #999;border-radius:2px;background:linear-gradient(90deg,#f4f4f4,#e0e0e0 50%,#cfcfcf)"></div>
<svg class="a" style="left:704px;top:511px" width="17" height="85"><path d="M4.5 12.5l4-4 4 4z" fill="#333"/><path d="M4.5 71.5l4 4 4-4z" fill="#333"/></svg>
<div class="chk" style="left:731px;top:519px;background:linear-gradient(135deg,#e4e4e4,#fafafa)"></div>
<svg class="a" style="left:731px;top:519px" width="13" height="13"><path d="M3.2 6.3l2.3 3.6 4.3-7.4" stroke="#3a55a6" fill="none" stroke-width="1.9" stroke-linejoin="round"/></svg>
<div class="t" style="left:749px;top:520px;font-size:12.5px">Sound</div>
<div class="chk" style="left:731px;top:542px;background:linear-gradient(135deg,#e4e4e4,#fafafa)"></div>
<div class="t" style="left:749px;top:543px;font-size:12.5px">Hints</div>
</body></html>
